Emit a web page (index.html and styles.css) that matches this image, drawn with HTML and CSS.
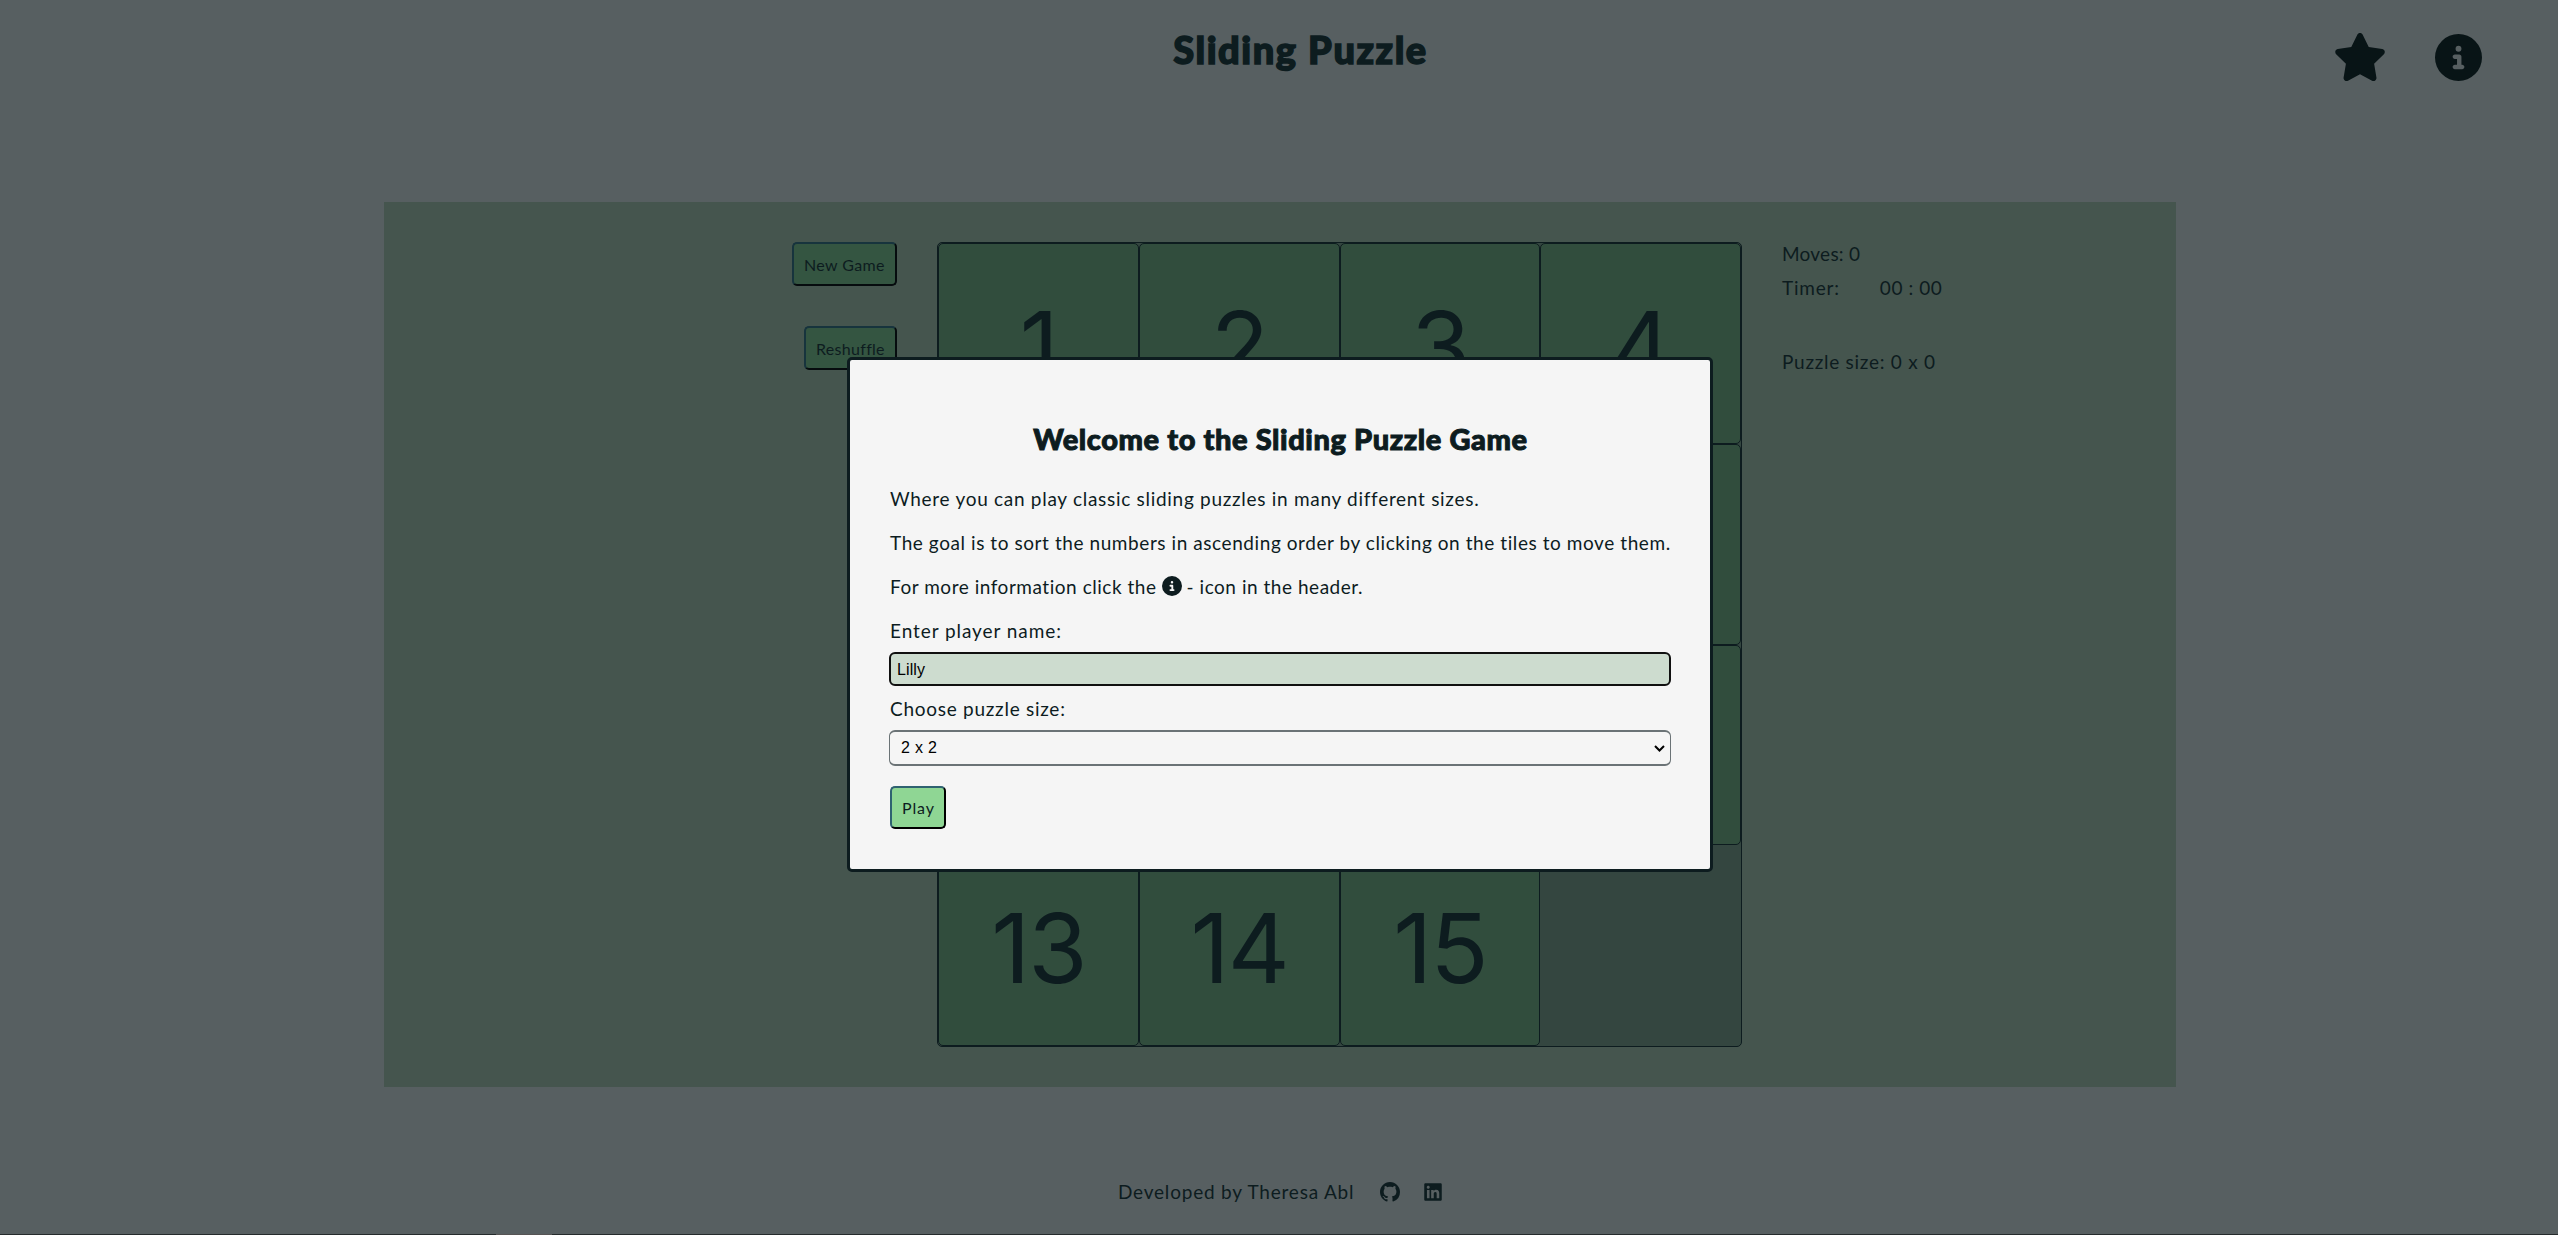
FILE: index.html
```
<!DOCTYPE html>
<html lang="en">
<head>
<meta charset="utf-8">
<title>Sliding Puzzle</title>
<link rel="stylesheet" href="styles.css">
</head>
<body>
<header class="header">
  <h1 class="title">Sliding Puzzle</h1>
  <nav class="header-icons">
    <svg class="icon-star" viewBox="0 0 576 512"><path d="M316.9 18C311.6 7 300.4 0 288.1 0s-23.4 7-28.8 18L195 150.3 51.4 171.5c-12 1.8-22 10.2-25.7 21.7s-.7 24.2 7.9 32.7L137.8 329 113.2 474.7c-2 12 3 24.2 12.9 31.3s23 8 33.8 2.3l128.3-68.500 128.300 68.500c10.800 5.700 23.900 4.900 33.800-2.300s14.900-19.300 12.900-31.300L438.500 329 542.700 225.900c8.600-8.500 11.700-21.200 7.900-32.700s-13.700-19.900-25.700-21.700L381.200 150.300 316.900 18z"/></svg>
    <svg class="icon-info" viewBox="0 0 512 512"><path d="M256 512A256 256 0 1 0 256 0a256 256 0 1 0 0 512zM216 336h24V272H216c-13.300 0-24-10.700-24-24s10.700-24 24-24h48c13.300 0 24 10.700 24 24v88h8c13.300 0 24 10.700 24 24s-10.700 24-24 24H216c-13.300 0-24-10.700-24-24s10.700-24 24-24zm40-208a32 32 0 1 1 0 64 32 32 0 1 1 0-64z"/></svg>
  </nav>
</header>

<main class="main">
  <div class="controls">
    <button class="btn btn-new">New Game</button>
    <button class="btn btn-shuffle">Reshuffle</button>
  </div>
  <div class="board">
    <div class="tile">1</div><div class="tile">2</div><div class="tile">3</div><div class="tile">4</div>
    <div class="tile">5</div><div class="tile">6</div><div class="tile">7</div><div class="tile">8</div>
    <div class="tile">9</div><div class="tile">10</div><div class="tile">11</div><div class="tile">12</div>
    <div class="tile">13</div><div class="tile">14</div><div class="tile">15</div><div class="gap"></div>
  </div>
  <div class="stats">
    <p class="stat stat-moves">Moves: 0</p>
    <p class="stat stat-timer"><span class="stat-name">Timer:</span><span class="stat-time">00 : 00</span></p>
    <p class="stat stat-size">Puzzle size: 0 x 0</p>
  </div>
</main>

<footer class="footer">
  <span class="credit">Developed by Theresa Abl</span>
  <svg class="icon-github" viewBox="0 0 16 16"><path d="M8 0C3.580 0 0 3.580 0 8c0 3.540 2.290 6.530 5.470 7.590.4.070.55-.17.55-.38 0-.19-.01-.82-.01-1.490-2.010.37-2.530-.49-2.690-.94-.09-.23-.48-.94-.82-1.130-.28-.15-.68-.52-.01-.53.63-.01 1.080.58 1.230.82.72 1.210 1.870.87 2.330.66.07-.52.28-.87.51-1.070-1.780-.2-3.640-.89-3.640-3.950 0-.87.31-1.590.82-2.150-.08-.2-.36-1.020.08-2.120 0 0 .67-.21 2.200.82.64-.18 1.320-.27 2-.27s1.360.09 2 .27c1.530-1.040 2.200-.82 2.200-.82.44 1.100.16 1.920.08 2.120.51.56.82 1.270.82 2.150 0 3.070-1.870 3.750-3.650 3.950.29.25.54.73.54 1.480 0 1.070-.01 1.930-.01 2.200 0 .21.15.46.55.38A8.010 8.010 0 0 0 16 8c0-4.420-3.580-8-8-8z"/></svg>
  <svg class="icon-linkedin" viewBox="0 0 448 512"><path d="M416 32H31.900C14.300 32 0 46.500 0 64.300v383.400C0 465.500 14.300 480 31.900 480H416c17.600 0 32-14.500 32-32.300V64.300c0-17.800-14.400-32.300-32-32.300zM135.400 416H69V202.200h66.500V416zm-33.200-243c-21.300 0-38.500-17.300-38.500-38.500S80.900 96 102.200 96c21.200 0 38.500 17.300 38.500 38.500 0 21.300-17.200 38.500-38.500 38.500zm282.100 243h-66.400V312c0-24.800-.5-56.700-34.500-56.700-34.600 0-39.900 27-39.900 54.900V416h-66.400V202.200h63.700v29.200h.9c8.900-16.800 30.600-34.500 62.900-34.500 67.200 0 79.700 44.300 79.700 101.900V416z"/></svg>
</footer>
<div class="edge"></div>

<div class="modal">
  <h2 class="modal-title">Welcome to the Sliding Puzzle Game</h2>
  <p class="line line-intro">Where you can play classic sliding puzzles in many different sizes.</p>
  <p class="line line-goal">The goal is to sort the numbers in ascending order by clicking on the tiles to move them.</p>
  <p class="line line-more"><span>For more information click the</span><svg class="icon-inline" viewBox="0 0 512 512"><path d="M256 512A256 256 0 1 0 256 0a256 256 0 1 0 0 512zM216 336h24V272H216c-13.300 0-24-10.700-24-24s10.700-24 24-24h48c13.300 0 24 10.700 24 24v88h8c13.300 0 24 10.700 24 24s-10.700 24-24 24H216c-13.300 0-24-10.700-24-24s10.700-24 24-24zm40-208a32 32 0 1 1 0 64 32 32 0 1 1 0-64z"/></svg><span>- icon in the header.</span></p>
  <label class="label label-name">Enter player name:</label>
  <div class="input">Lilly</div>
  <label class="label label-size">Choose puzzle size:</label>
  <div class="select"><span>2 x 2</span><svg class="chevron" viewBox="0 0 11 7"><path d="M1 1l4.500 4.500L10 1"/></svg></div>
  <button class="btn btn-play">Play</button>
</div>
</body>
</html>
```
FILE: styles.css
```
* { box-sizing: border-box; }
body {
  margin: 0;
  height: 1235px;
  overflow: hidden;
  display: flex;
  flex-direction: column;
  background: #575f61;
  color: #0d1c1f;
  font-family: Lato, "Open Sans", sans-serif;
  font-size: 19px;
}
h1, h2, p { margin: 0; }
svg { display: block; flex: none; fill: currentColor; }

.header {
  height: 202px;
  display: grid;
  grid-template-columns: 1fr auto 1fr;
  padding-top: 26px;
}
.title {
  grid-column: 2;
  font-size: 38px;
  font-weight: 900;
  line-height: 46px;
  letter-spacing: 1.530px;
  padding-left: 43px;
  white-space: nowrap;
  -webkit-text-stroke: 1.500px currentColor;
}
.header-icons {
  justify-self: end;
  display: flex;
  gap: 48px;
  padding: 7px 76px 0 0;
  color: #081416;
}
.icon-star { width: 54px; height: 48px; }
.icon-info { width: 47px; height: 47px; margin-top: 1px; }

.main {
  width: 1792px;
  height: 885px;
  margin-left: 384px;
  padding: 40px 0;
  display: grid;
  grid-template-columns: 513px 805px 1fr;
  column-gap: 40px;
  background: #45554e;
}
.controls {
  display: flex;
  flex-direction: column;
  align-items: flex-end;
  gap: 40px;
}
.btn {
  height: 44px;
  padding: 0 0 0 10px;
  text-align: left;
  font: 16px Lato, sans-serif;
  color: #0d1c1f;
  background: #345541;
  border: 2px solid;
  border-color: #17343d #060c0e #060c0e #17343d;
  border-radius: 5px;
  white-space: nowrap;
}
.btn-new { width: 105px; letter-spacing: 0.380px; }
.btn-shuffle { width: 93px; letter-spacing: 0.300px; }

.board {
  height: 805px;
  display: grid;
  grid-template-columns: repeat(4, 1fr);
  grid-template-rows: repeat(4, 1fr);
  border: 1px solid #0d1c1f;
  border-radius: 5px;
  background: #344640;
}
.tile {
  display: flex;
  align-items: center;
  justify-content: center;
  padding-top: 5px;
  font: 96px/1 Inter, sans-serif;
  letter-spacing: -2px;
  background: #314d3d;
  border: 1px solid #0d1c1f;
  border-radius: 5px;
}

.stats { padding-top: 0; }
.stat { line-height: 24px; margin-bottom: 10px; white-space: nowrap; }
.stat-moves { letter-spacing: 0.240px; }
.stat-timer { display: flex; margin-bottom: 50px; letter-spacing: 0.790px; }
.stat-name { margin-right: 40px; }
.stat-time { letter-spacing: 0.570px; }
.stat-size { letter-spacing: 0.730px; }

.footer {
  height: 147px;
  display: flex;
  padding: 93px 0 0 1118px;
}
.credit { line-height: 24px; letter-spacing: 0.790px; white-space: nowrap; }
.icon-github { width: 20px; height: 20px; margin: 2px 0 0 26px; }
.icon-linkedin { width: 18px; height: 20px; margin: 2px 0 0 24px; }
.edge { height: 1px; background: linear-gradient(90deg, #252b2c 496px, #565454 496px 552px, #252b2c 552px); }

.modal {
  position: absolute;
  left: 847px;
  top: 357px;
  width: 866px;
  height: 515px;
  padding: 0 39px 0 40px;
  border: 3px solid #0d1c1f;
  border-radius: 5px;
  background: #f5f5f5;
}
.modal-title {
  margin-top: 61px;
  font-size: 29px;
  font-weight: 900;
  line-height: 36px;
  letter-spacing: 0.600px;
  text-align: center;
  white-space: nowrap;
  -webkit-text-stroke: 1px currentColor;
}
.line {
  display: flex;
  line-height: 24px;
  margin-top: 20px;
  white-space: nowrap;
}
.modal-title + .line { margin-top: 30px; }
.line-intro { letter-spacing: 0.710px; }
.line-goal { letter-spacing: 0.572px; }
.line-more { letter-spacing: 0.530px; }
.icon-inline { width: 20px; height: 20px; margin: 1px 5px 0; }
.label { display: block; line-height: 24px; margin-top: 20px; }
.label-name { letter-spacing: 0.930px; }
.label-size { letter-spacing: 0.730px; }
.input + .label { margin-top: 11px; }
.input, .select {
  width: 782px;
  margin-left: -1px;
  font: 16px "Liberation Sans", sans-serif;
  color: #000;
}
.input {
  height: 34px;
  margin-top: 9px;
  padding: 0 6px;
  line-height: 31px;
  letter-spacing: 0.100px;
  background: #cddccf;
  border: 2px solid #101010;
  border-radius: 6px;
}
.select {
  height: 36px;
  margin-top: 9px;
  padding: 0 5px 0 11px;
  display: flex;
  align-items: center;
  justify-content: space-between;
  letter-spacing: 0.330px;
  border: 1px solid #6b7376;
  border-width: 2px 1px;
  border-radius: 6px;
}
.chevron { width: 11px; height: 7px; fill: none; stroke: #000; stroke-width: 2; }
.btn-play {
  display: block;
  width: 56px;
  height: 43px;
  margin: 20px 0 0;
  letter-spacing: 0.850px;
  background: #8fd694;
  border-color: #2f6271 #000 #000 #2f6271;
}
```
